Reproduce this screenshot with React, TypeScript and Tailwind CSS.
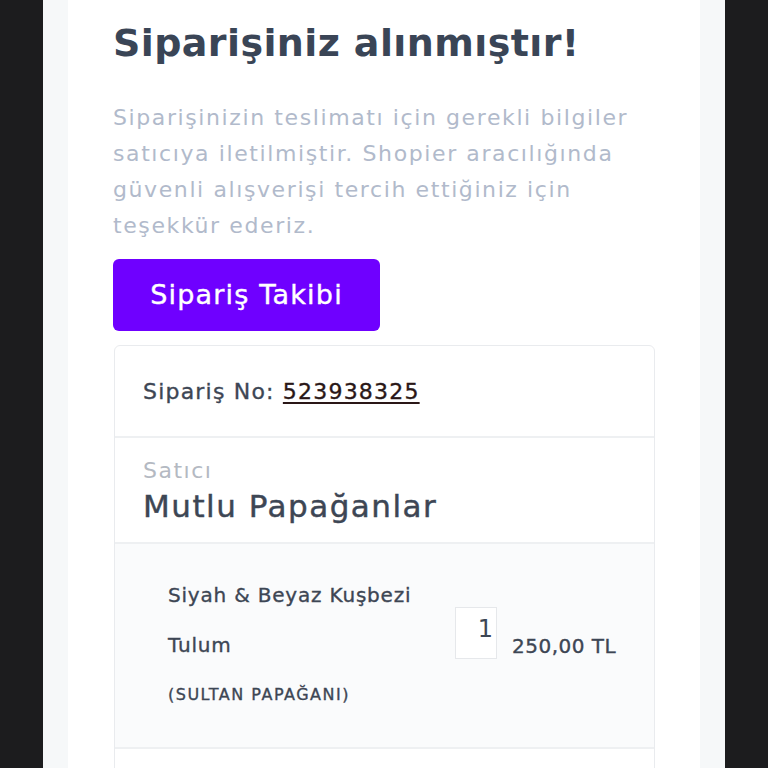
export default function App() {
  return (
    <div
      className="h-screen overflow-hidden bg-[#1c1c1e] flex justify-center"
      style={{ fontFamily: '"DejaVu Sans", "Noto Sans", sans-serif' }}
    >
      <div className="w-[682px] bg-[#f6f8f9] px-[25px]">
        <div className="bg-white h-full px-[45px] pt-[18px]">
          <h1 className="text-[38px] leading-[50px] font-bold text-[#3a4556] tracking-[0.4px] whitespace-nowrap">
            Siparişiniz alınmıştır!
          </h1>
          <p className="mt-[32px] text-[22px] leading-[36px] text-[#b1bacb] tracking-[1.6px] whitespace-nowrap">
            Siparişinizin teslimatı için gerekli bilgiler
            <br />
            satıcıya iletilmiştir. Shopier aracılığında
            <br />
            güvenli alışverişi tercih ettiğiniz için
            <br />
            teşekkür ederiz.
          </p>
          <button className="mt-[15px] w-[267px] h-[72px] rounded-[6px] bg-[#6f00ff] text-white text-[27px] tracking-[1.2px] [-webkit-text-stroke-width:0.4px]">
            Sipariş Takibi
          </button>

          <div className="mt-[14px] ml-px border border-[#e9ebee] rounded-t-[6px]">
            <div className="h-[90px] px-[28px] flex items-center text-[22px] tracking-[1.2px] text-[#3d4654] [-webkit-text-stroke-width:0.35px]">
              <span>Sipariş No:&nbsp;</span>
              <a className="underline text-[#2a1717] underline-offset-[3px] decoration-[1.5px]">523938325</a>
            </div>
            <div className="border-t-2 border-[#eef0f2] h-[106px] px-[28px] pt-[18px]">
              <div className="text-[22px] leading-[30px] tracking-[1.5px] text-[#b4b9c2]">Satıcı</div>
              <div className="text-[31px] leading-[40px] tracking-[1.5px] text-[#3d4654] [-webkit-text-stroke-width:0.45px] whitespace-nowrap">
                Mutlu Papağanlar
              </div>
            </div>
            <div className="border-t-2 border-[#eef0f2] bg-[#fafbfc] h-[205px] pl-[53px] pt-[26px] flex items-start">
              <div className="w-[287px] text-[20px] leading-[50px] tracking-[0.8px] text-[#3d4654] [-webkit-text-stroke-width:0.35px]">
                <div>Siyah &amp; Beyaz Kuşbezi Tulum</div>
                <div className="text-[16px] tracking-[1.5px] whitespace-nowrap">(SULTAN PAPAĞANI)</div>
              </div>
              <div className="mt-[37px] w-[42px] h-[52px] bg-white border border-[#e6e8eb] flex justify-end pr-[3px] pt-[6px] text-[24px] leading-[30px] text-[#3d4654]">
                1
              </div>
              <div className="ml-[15px] mt-[51px] text-[20px] leading-[50px] tracking-[0.5px] text-[#3d4654] [-webkit-text-stroke-width:0.35px] whitespace-nowrap">
                250,00 TL
              </div>
            </div>
            <div className="border-t-2 border-[#eef0f2] h-[40px]" />
          </div>
        </div>
      </div>
    </div>
  );
}
